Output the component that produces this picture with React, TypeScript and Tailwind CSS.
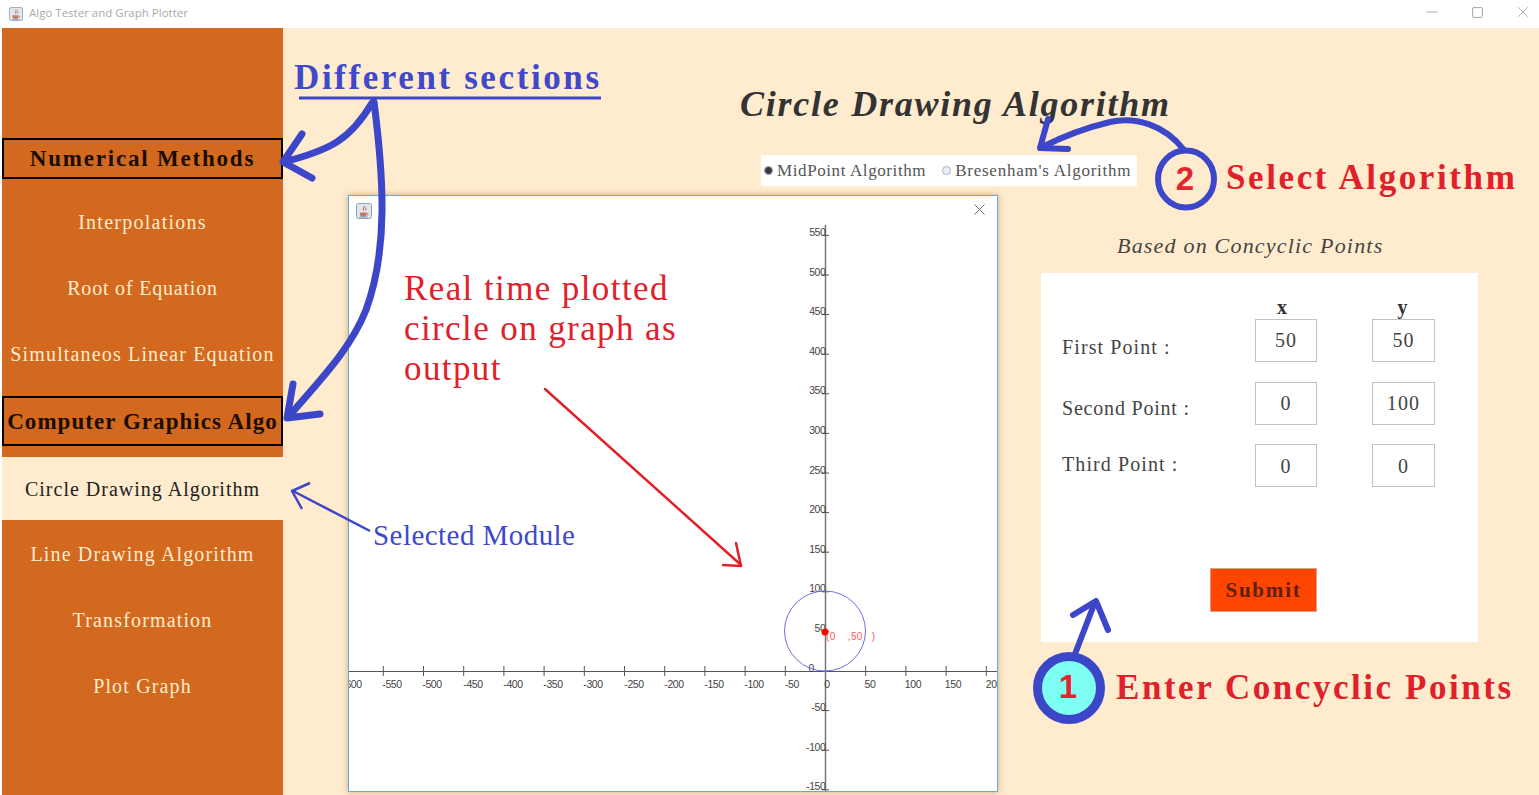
import { Minus, Square, X } from "lucide-react";

const serif = "font-['Liberation_Serif',serif]";

function JavaIcon({ size = 14 }: { size?: number }) {
    return (
        <svg width={size} height={size} viewBox="0 0 16 16">
            <rect x="0.5" y="0.5" width="15" height="15" rx="2" fill="#dfe6ee" stroke="#8da2b8" />
            <path d="M4 9.5h6.5v2a2 2 0 0 1-2 2H6a2 2 0 0 1-2-2z" fill="#c47a5e" />
            <path d="M10.5 10.5h1.5v1.5h-1.5" fill="none" stroke="#c47a5e" strokeWidth="0.8" />
            <path d="M8 3c1 1.5-1.5 2.5-.5 4.5M10 4.5c.6 1-1 1.6-.4 3" fill="none" stroke="#c8553a" strokeWidth="1" />
            <path d="M3.5 14h8" stroke="#5d7ea6" strokeWidth="0.8" />
        </svg>
    );
}

function SectionBox({ label, className }: { label: string; className: string }) {
    return (
        <div className={`border-2 border-black flex items-center justify-center text-[#1a0d00] font-bold text-[23px] whitespace-nowrap ${className}`}>
            {label}
        </div>
    );
}

function NavRow({ label, className = "h-[66px] text-[#ffebcd] tracking-[1.15px]" }: { label: string; className?: string }) {
    return (
        <div className={`flex items-center justify-center whitespace-nowrap text-[20px] ${className}`}>
            {label}
        </div>
    );
}

function Sidebar() {
    return (
        <aside className={`w-[281px] h-[767px] bg-[#d2691e] shrink-0 ${serif}`}>
            <div className="h-[110px]" />
            <SectionBox label="Numerical Methods" className="h-[41px] tracking-[1.8px] pt-[1px]" />
            <div className="h-[10px]" />
            <NavRow label="Interpolations" className="h-[66px] text-[#ffebcd] tracking-[1.25px]" />
            <NavRow label="Root of Equation" className="h-[66px] text-[#ffebcd] tracking-[0.8px]" />
            <NavRow label="Simultaneos Linear Equation" />
            <div className="h-[9px]" />
            <SectionBox label="Computer Graphics Algo" className="h-[50px] tracking-[1.05px] pt-[2px]" />
            <div className="h-[11px]" />
            <NavRow label="Circle Drawing Algorithm" className="h-[63px] bg-[#ffebcd] text-[#222] tracking-[1px]" />
            <div className="h-[1px]" />
            <NavRow label="Line Drawing Algorithm" />
            <NavRow label="Transformation" />
            <NavRow label="Plot Graph" />
        </aside>
    );
}

function PointInput({ value }: { value: string }) {
    return (
        <div className="h-[43px] border-[1.5px] border-[#bfc3c9] flex items-center justify-center text-[20px] text-[#444] bg-white">
            {value}
        </div>
    );
}

function ConcyclicForm() {
    return (
        <div className={`ml-[758px] mt-[12px] w-[437px] h-[369px] bg-white pt-[24px] ${serif}`}>
            <div className="grid grid-cols-[214px_62px_55px_63px] h-[21px] items-start leading-[21px] font-bold text-[20px] text-[#333] text-center">
                <span />
                <span className="pr-[8px]">x</span>
                <span />
                <span className="pr-[2px]">y</span>
            </div>
            <div className="grid grid-cols-[21px_193px_62px_55px_63px] gap-y-[19.5px] items-center text-[20px] tracking-[1.1px] text-[#444]">
                <span />
                <span className="mt-[14px]">First Point :</span>
                <PointInput value="50" />
                <span />
                <PointInput value="50" />
                <span />
                <span className="mt-[10px] tracking-[0.8px]">Second Point :</span>
                <PointInput value="0" />
                <span />
                <PointInput value="100" />
                <span />
                <span className="mb-[4px]">Third Point :</span>
                <PointInput value="0" />
                <span />
                <PointInput value="0" />
            </div>
            <button className="ml-[169px] mt-[81px] w-[107px] h-[44px] pt-[2px] bg-[#ff4500] border border-[#d9a08c] flex items-center justify-center font-bold text-[21px] tracking-[1.8px] text-[#5a2210]">
                Submit
            </button>
        </div>
    );
}

const xTicks = [-550, -500, -450, -400, -350, -300, -250, -200, -150, -100, -50, 0, 50, 100, 150, 200];
const xLabels: [string, number][] = [
    ["-600", 352], ["-550", 392], ["-500", 432], ["-450", 473], ["-400", 513], ["-350", 553], ["-300", 593], ["-250", 634],
    ["-200", 674], ["-150", 714], ["-100", 754], ["-50", 792], ["0", 827], ["50", 870], ["100", 913], ["150", 953], ["200", 994],
];
const yTicks = [550, 500, 450, 400, 350, 300, 250, 200, 150, 100, 50, -50, -100, -150];

function Graph() {
    return (
        <svg className="w-[648px] h-[595px] block" viewBox="349 196 648 595">
            <g stroke="#555" strokeWidth="1">
                <line x1="349" y1="671.5" x2="997" y2="671.5" />
                {xTicks.map((t) => (
                    <line key={t} x1={825.5 + t * 0.804} y1="666" x2={825.5 + t * 0.804} y2="676" />
                ))}
            </g>
            <line x1="825.5" y1="225" x2="825.5" y2="791" stroke="#777" strokeWidth="1.5" />
            <g stroke="#555" strokeWidth="1">
                {yTicks.map((t) => (
                    <line key={t} x1="822" y1={671 - t * 0.792} x2="829" y2={671 - t * 0.792} />
                ))}
            </g>
            <g fontFamily="'Liberation Sans', sans-serif" fontSize="10.5" letterSpacing="-0.4" fill="#444">
                {xLabels.map(([l, x]) => (
                    <text key={l} x={x} y="687.5" textAnchor="middle">{l}</text>
                ))}
                {yTicks.map((t) => (
                    <text key={t} x="825.5" y={671 - t * 0.792} dy="0.5" textAnchor="end">{t}</text>
                ))}
                <text x="814" y="671.5" textAnchor="end">0</text>
            </g>
            <ellipse cx="825" cy="631" rx="40.5" ry="40" fill="none" stroke="#6a70e0" strokeWidth="1" />
            <circle cx="825" cy="632" r="3.5" fill="#f00" />
            <text x="826" y="640" fontFamily="'Liberation Sans', sans-serif" fontSize="10" letterSpacing="0.3" fill="#ff5a5a" xmlSpace="preserve">(0    ,50   )</text>
        </svg>
    );
}

function PlotWindow() {
    return (
        <div className="absolute left-[65px] top-[167px] w-[650px] h-[597px] bg-white border border-[#6fa8d0] shadow-[0_0_6px_rgba(120,90,50,0.45)] overflow-hidden">
            <div className="absolute left-[7px] top-[7px]">
                <JavaIcon size={16} />
            </div>
            <X className="absolute right-[8px] top-[4px] w-[19px] h-[19px] text-[#666]" strokeWidth={1.2} />
            <Graph />
        </div>
    );
}

function Annotations() {
    return (
        <>
            <svg className="absolute inset-0 w-[1539px] h-[795px] pointer-events-none" viewBox="0 0 1539 795" fill="none" stroke="#3c46c8" strokeLinecap="round" strokeLinejoin="round">
                <path d="M299 98H601" strokeWidth="3" strokeLinecap="butt" />
                <path d="M372 103C350 140 330 150 284 162" strokeWidth="7" />
                <path d="M302 134L283 162L312 178" strokeWidth="7" />
                <path d="M374 102C384 180 388 250 366 310C350 350 320 380 290 415" strokeWidth="7" />
                <path d="M293 384L287 418L320 414" strokeWidth="7" />
                <path d="M370 531L293 491" strokeWidth="2.5" strokeLinecap="butt" />
                <path d="M310 483L292 491L302 509" strokeWidth="2.5" strokeLinecap="butt" />
                <path d="M545 389L741 565" stroke="#e3202a" strokeWidth="2.5" />
                <path d="M723 565L741 566L736 543" stroke="#e3202a" strokeWidth="2.5" />
                <path d="M1184 150C1165 125 1135 116 1110 122C1085 128 1060 138 1042 147" strokeWidth="6" />
                <path d="M1048 119L1040 148L1068 149" strokeWidth="6" />
                <ellipse cx="1186" cy="179" rx="28" ry="28.5" strokeWidth="6" />
                <circle cx="1069" cy="688" r="31.5" fill="#7ffff4" strokeWidth="9" />
                <path d="M1075 654L1095 602" strokeWidth="6" strokeLinecap="butt" />
                <path d="M1073 615L1096 601L1108 630" strokeWidth="6" />
            </svg>
            <div className={`absolute left-[294px] top-[56px] font-bold text-[35px] leading-[44px] tracking-[2.6px] text-[#3f49c9] whitespace-nowrap ${serif}`}>Different sections</div>
            <div className={`absolute left-[404px] top-[269px] text-[35px] leading-[40px] tracking-[1.4px] text-[#e0202a] ${serif}`}>
                Real time plotted
                <br />
                circle on graph as
                <br />
                output
            </div>
            <div className={`absolute left-[373px] top-[517px] text-[29px] leading-[36px] tracking-[0.45px] text-[#3f49c9] whitespace-nowrap ${serif}`}>Selected Module</div>
            <div className={`absolute left-[1226px] top-[156px] font-bold text-[35px] leading-[44px] tracking-[2.6px] text-[#e0202a] whitespace-nowrap ${serif}`}>Select Algorithm</div>
            <div className={`absolute left-[1116px] top-[666px] font-bold text-[35px] leading-[44px] tracking-[2.55px] text-[#e0202a] whitespace-nowrap ${serif}`}>Enter Concyclic Points</div>
            <div className="absolute left-[1173px] top-[160px] w-[24px] text-center font-['Liberation_Sans',sans-serif] font-bold text-[33px] leading-[38px] text-[#e3252f]">2</div>
            <div className="absolute left-[1056px] top-[668px] w-[24px] text-center font-['Liberation_Sans',sans-serif] font-bold text-[33px] leading-[38px] text-[#e3252f]">1</div>
        </>
    );
}

export default function App() {
    return (
        <div className="relative w-[1539px] h-[795px] overflow-hidden bg-white">
            {/* Title bar */}
            <div className="h-[28px] flex items-center pl-[9px] pr-[7px] bg-white">
                <JavaIcon />
                <span className="ml-[6px] mb-[2px] text-[11.5px] text-[#a9a9a9] font-['Open_Sans',sans-serif]">Algo Tester and Graph Plotter</span>
                <div className="ml-auto mb-[4px] flex items-center gap-[30px] text-[#a0a0a0]">
                    <Minus className="w-[18px] h-[18px]" strokeWidth={1.2} />
                    <Square className="w-[13px] h-[13px]" strokeWidth={1.8} />
                    <X className="w-[18px] h-[18px]" strokeWidth={1.1} />
                </div>
            </div>

            <div className="flex pl-[2px] h-[767px]">
                <Sidebar />
                <main className={`relative flex-1 bg-[#ffebcd] flex flex-col ${serif}`}>
                    <h1 className="ml-[457px] mt-[54px] h-[44px] leading-[44px] text-[36px] font-bold italic tracking-[1.75px] text-[#333] whitespace-nowrap">
                        Circle Drawing Algorithm
                    </h1>
                    <div className="ml-[478px] mt-[29px] w-[376px] h-[31px] bg-white flex items-center pl-[3px] text-[17px] text-[#555] whitespace-nowrap">
                        <span className="w-[9px] h-[9px] rounded-full bg-[#3a3a3a] border border-[#aab]" />
                        <span className="ml-[4px] tracking-[0.6px]">MidPoint Algorithm</span>
                        <span className="ml-[16px] w-[9px] h-[9px] rounded-full bg-[#e8eef6] border border-[#a9b6c6]" />
                        <span className="ml-[4px] tracking-[0.75px]">Bresenham's Algorithm</span>
                    </div>
                    <div className="ml-[834px] mt-[45px] h-[30px] leading-[30px] text-[22px] italic tracking-[1.2px] text-[#444] whitespace-nowrap">
                        Based on Concyclic Points
                    </div>
                    <ConcyclicForm />
                    <PlotWindow />
                </main>
            </div>

            <Annotations />
        </div>
    );
}
